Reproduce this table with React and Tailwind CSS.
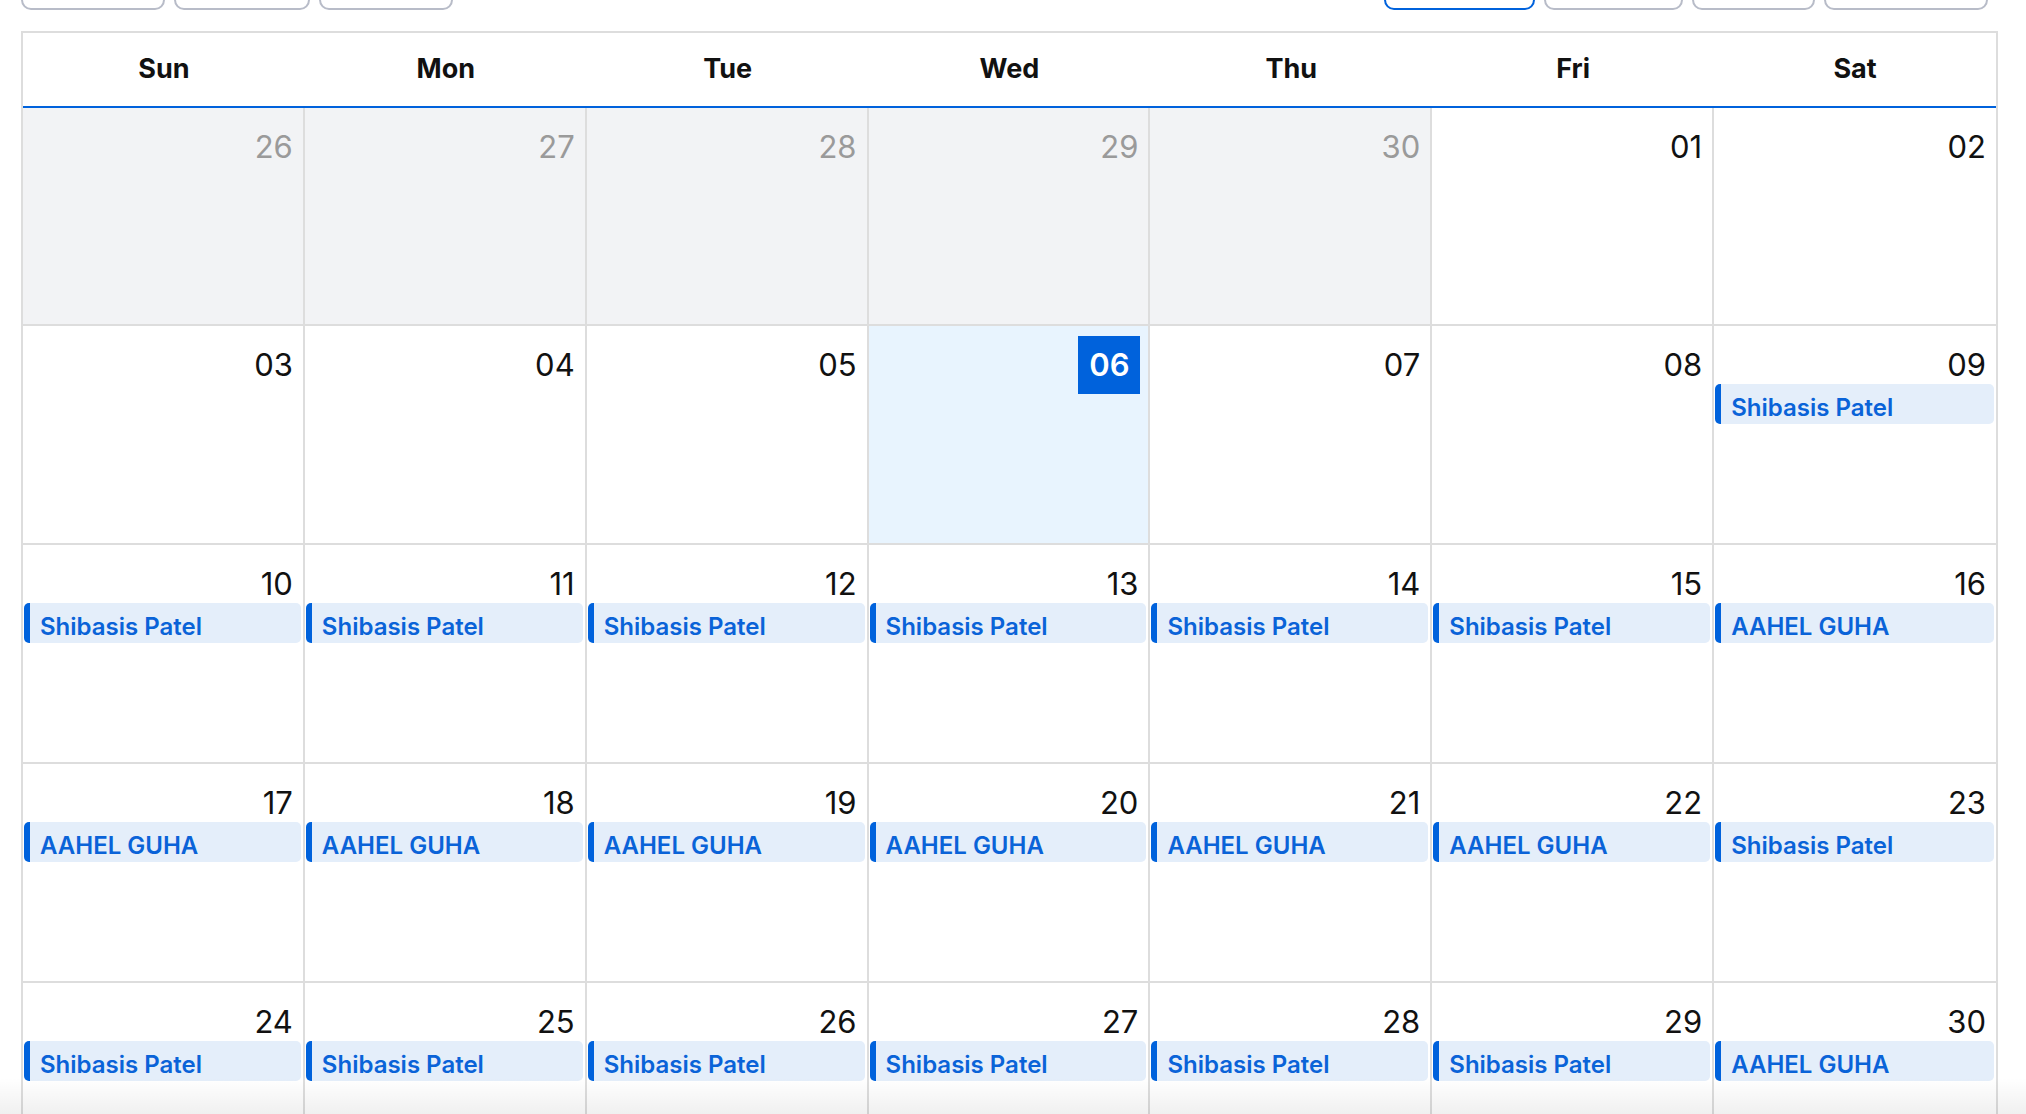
import React from 'react';

const S = 'Shibasis Patel';
const A = 'AAHEL GUHA';

const weekdays = ['Sun', 'Mon', 'Tue', 'Wed', 'Thu', 'Fri', 'Sat'];

const weeks = [
  [
    { d: '26', off: true },
    { d: '27', off: true },
    { d: '28', off: true },
    { d: '29', off: true },
    { d: '30', off: true },
    { d: '01' },
    { d: '02' },
  ],
  [{ d: '03' }, { d: '04' }, { d: '05' }, { d: '06', today: true }, { d: '07' }, { d: '08' }, { d: '09', ev: S }],
  [
    { d: '10', ev: S },
    { d: '11', ev: S },
    { d: '12', ev: S },
    { d: '13', ev: S },
    { d: '14', ev: S },
    { d: '15', ev: S },
    { d: '16', ev: A },
  ],
  [
    { d: '17', ev: A },
    { d: '18', ev: A },
    { d: '19', ev: A },
    { d: '20', ev: A },
    { d: '21', ev: A },
    { d: '22', ev: A },
    { d: '23', ev: S },
  ],
  [
    { d: '24', ev: S },
    { d: '25', ev: S },
    { d: '26', ev: S },
    { d: '27', ev: S },
    { d: '28', ev: S },
    { d: '29', ev: S },
    { d: '30', ev: A },
  ],
];

function DayCell({ day, col }) {
  const bg = day.off ? 'bg-[#f2f3f5]' : day.today ? 'bg-[#e8f4fe]' : 'bg-white';
  return (
    <div className={`flex min-w-0 flex-col ${bg} ${col < 6 ? 'border-r-2 border-[#dddddd]' : ''}`}>
      <div className="flex h-[57px] justify-end">
        {day.today ? (
          <span className="mt-[10px] mr-[8px] flex h-[58px] w-[62px] shrink-0 items-center justify-center self-start bg-[#0062dc] text-[31px] font-semibold leading-[36px] text-white">
            {day.d}
          </span>
        ) : (
          <span
            className={`mt-[21px] mr-[10px] self-start text-[31px] leading-[36px] ${
              day.off ? 'text-[#9a9a9a]' : 'text-[#111111]'
            }`}
          >
            {day.d}
          </span>
        )}
      </div>
      {day.ev && (
        <div className="mt-[1px] ml-[1px] mr-[2px] h-[40px] truncate rounded-[5px] border-l-[6px] border-[#0062dc] bg-[#e4eefa] pl-[10px] pt-[7px] text-[24px] font-semibold leading-[33px] text-[#0a63d8]">
          {day.ev}
        </div>
      )}
    </div>
  );
}

function ToolButton({ w, active }) {
  return (
    <div
      className={`h-[48px] shrink-0 rounded-[10px] border-2 ${active ? 'border-[#0062dc]' : 'border-[#b8bcc8]'} ${w}`}
    />
  );
}

export default function App() {
  return (
    <div className="relative h-[1114px] overflow-hidden bg-white font-[Inter,'Noto_Sans',sans-serif]">
      <div className="ml-[21px] w-[1977px]">
        {/* toolbar, scrolled mostly out of view */}
        <div className="mb-[21px] flex h-[10px] items-end justify-between overflow-hidden pr-[10px]">
          <div className="flex items-end gap-[9px]">
            <ToolButton w="w-[144px]" />
            <ToolButton w="w-[136px]" />
            <ToolButton w="w-[134px]" />
          </div>
          <div className="flex items-end gap-[9px]">
            <ToolButton w="w-[151px]" active />
            <ToolButton w="w-[139px]" />
            <ToolButton w="w-[123px]" />
            <ToolButton w="w-[164px]" />
          </div>
        </div>

        <div className="border-2 border-[#dddddd]">
          <div className="grid h-[75px] grid-cols-7 border-b-2 border-[#0062dc]">
            {weekdays.map((w) => (
              <div key={w} className="flex items-center justify-center text-[27px] font-bold text-[#111111]">
                {w}
              </div>
            ))}
          </div>
          {weeks.map((week, r) => (
            <div
              key={r}
              className={`grid grid-cols-7 ${r === 0 ? 'h-[216px]' : 'h-[219px] border-t-2 border-[#dddddd]'}`}
            >
              {week.map((day, c) => (
                <DayCell key={c} day={day} col={c} />
              ))}
            </div>
          ))}
        </div>
      </div>
      <div className="pointer-events-none absolute inset-x-0 bottom-0 h-[36px] bg-linear-to-b from-transparent to-black/[0.06]" />
    </div>
  );
}
